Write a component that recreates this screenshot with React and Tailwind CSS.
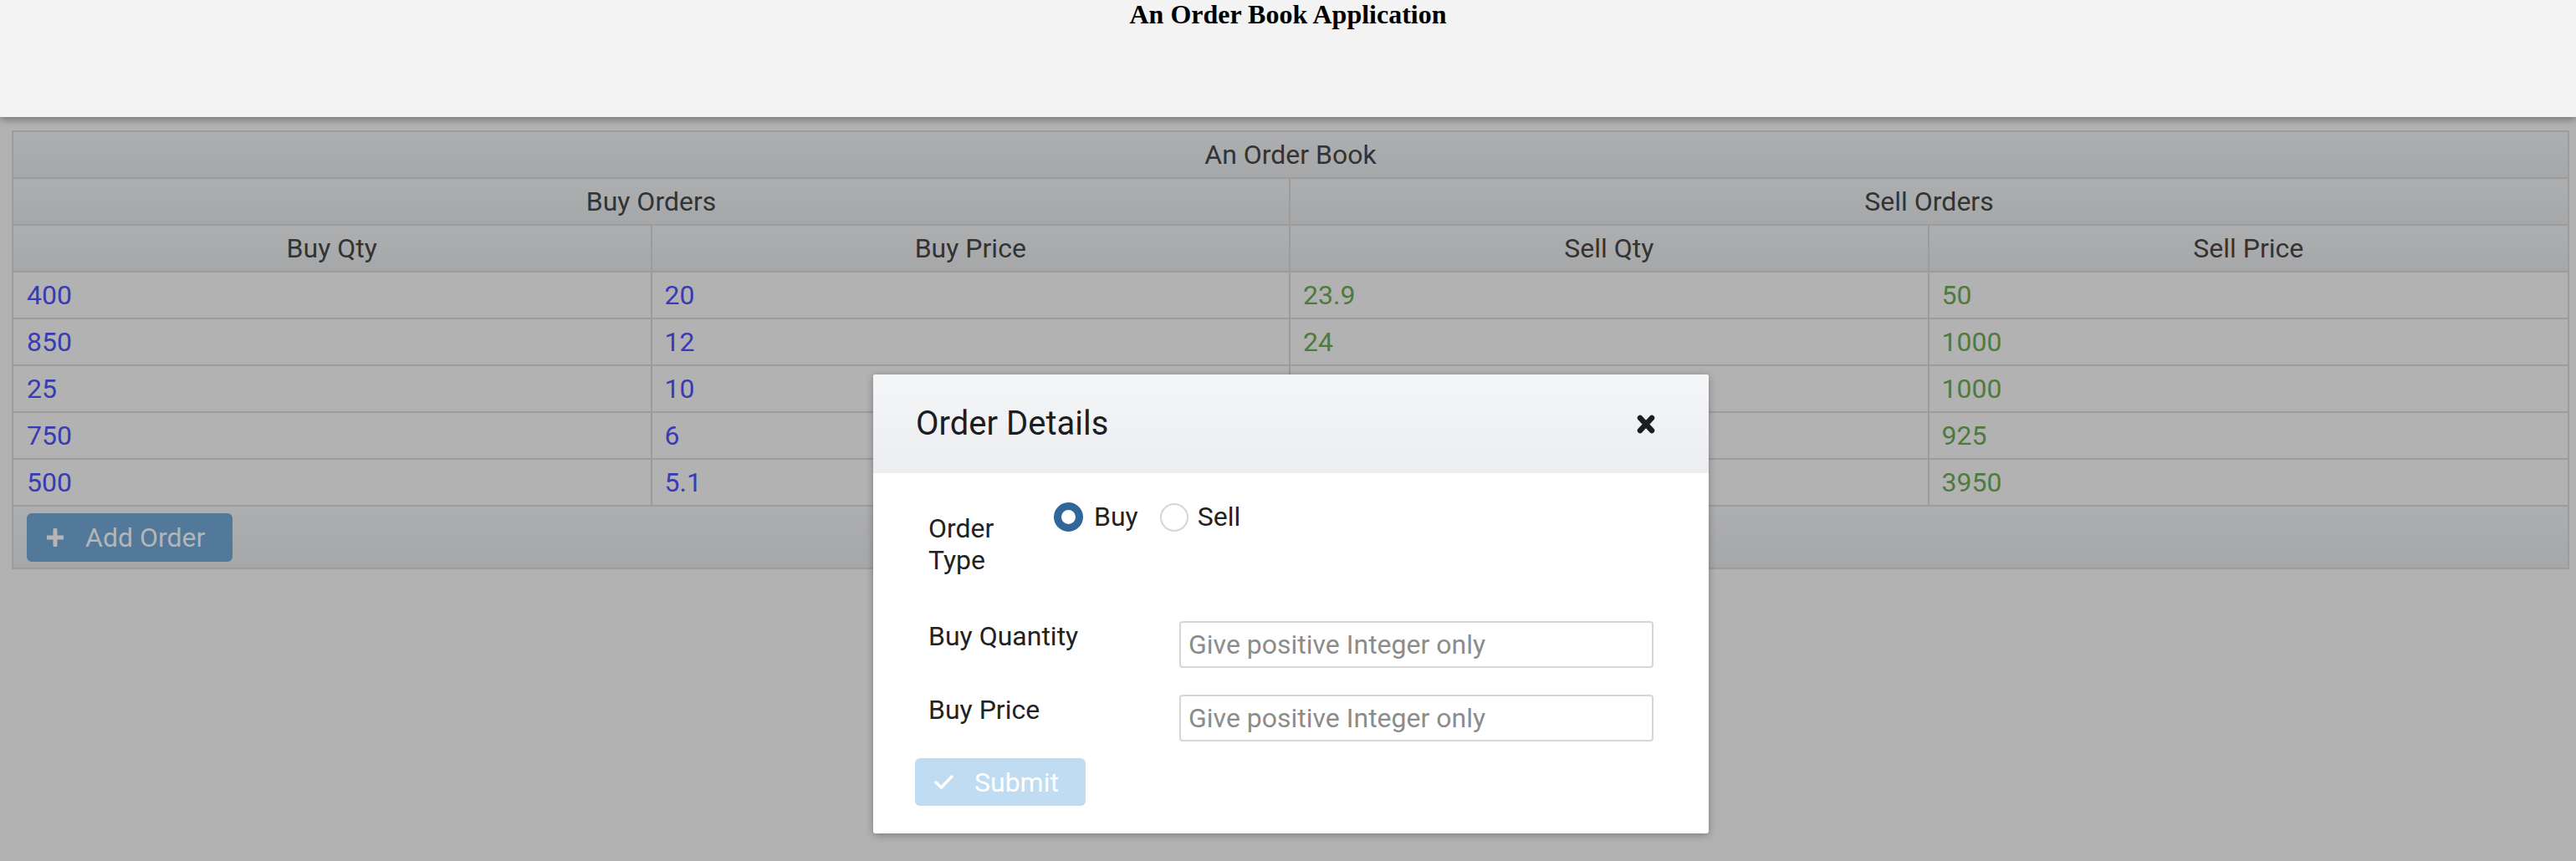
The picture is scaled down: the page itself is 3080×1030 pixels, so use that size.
// App.jsx
const buyOrders = [
  { qty: "400", price: "20" },
  { qty: "850", price: "12" },
  { qty: "25", price: "10" },
  { qty: "750", price: "6" },
  { qty: "500", price: "5.1" },
];

const sellOrders = [
  { qty: "23.9", price: "50" },
  { qty: "24", price: "1000" },
  { qty: "", price: "1000" },
  { qty: "", price: "925" },
  { qty: "", price: "3950" },
];

const PlusIcon = () => (
  <svg width="20" height="22" viewBox="0 0 20 22">
    <path d="M10 2v18M1 11h18" stroke="currentColor" strokeWidth="5" strokeLinecap="round" />
  </svg>
);

const CheckIcon = () => (
  <svg width="23" height="17" viewBox="0 0 23 17">
    <path d="M2 9l6.5 6L21 2" fill="none" stroke="currentColor" strokeWidth="3.5" strokeLinecap="round" strokeLinejoin="round" />
  </svg>
);

const CloseIcon = () => (
  <svg width="22" height="23" viewBox="0 0 22 23">
    <path d="M4 4l14 15M18 4L4 19" stroke="currentColor" strokeWidth="6.5" strokeLinecap="round" />
  </svg>
);

const headCell = "flex items-center justify-center bg-linear-to-b from-[#adaeb0] to-[#a6a7a9]";

const App = () => {
  return (
    <div className="relative min-h-[1030px] bg-[#b2b2b2] font-['Roboto',sans-serif]">
      {/* page header */}
      <div className="relative z-10 h-[140px] bg-[#f3f3f3] shadow-[0_3px_9px_rgba(0,0,0,0.35)]">
        <h1 className="text-center font-['Liberation_Serif',serif] text-[32px] font-bold leading-[34px] text-black">
          An Order Book Application
        </h1>
      </div>

      {/* order book table */}
      <div className="ml-[14px] mr-[8px] mt-[16px] border-2 border-[#9c9c9c] text-[32px]">
        <div className={`${headCell} h-[56px] border-b-2 border-[#9c9c9c] text-[#333]`}>An Order Book</div>
        <div className="grid grid-cols-2 border-b-2 border-[#9c9c9c] text-[#333]">
          <div className={`${headCell} h-[54px] border-r-2 border-[#9c9c9c]`}>Buy Orders</div>
          <div className={`${headCell} h-[54px]`}>Sell Orders</div>
        </div>
        <div className="grid grid-cols-4 border-b-2 border-[#9c9c9c] text-[#333]">
          <div className={`${headCell} h-[54px] border-r-2 border-[#9c9c9c]`}>Buy Qty</div>
          <div className={`${headCell} h-[54px] border-r-2 border-[#9c9c9c]`}>Buy Price</div>
          <div className={`${headCell} h-[54px] border-r-2 border-[#9c9c9c]`}>Sell Qty</div>
          <div className={`${headCell} h-[54px]`}>Sell Price</div>
        </div>

        {buyOrders.map((b, i) => (
          <div key={i} className="grid grid-cols-4 border-b-2 border-[#9c9c9c] bg-[#b2b2b2]">
            <div className="flex h-[54px] items-center border-r-2 border-[#9c9c9c] pl-[16px] text-[#3a3ab5]">{b.qty}</div>
            <div className="flex h-[54px] items-center border-r-2 border-[#9c9c9c] pl-[15px] text-[#3a3ab5]">{b.price}</div>
            <div className="flex h-[54px] items-center border-r-2 border-[#9c9c9c] pl-[15px] text-[#4e7a3e]">{sellOrders[i].qty}</div>
            <div className="flex h-[54px] items-center pl-[15px] text-[#4e7a3e]">{sellOrders[i].price}</div>
          </div>
        ))}

        <div className="bg-linear-to-b from-[#adaeb0] to-[#a6a7a9] px-[16px] pb-[7px] pt-[8px]">
          <button className="flex h-[58px] w-[246px] items-center gap-[26px] rounded-[6px] bg-[#52789a] pl-[24px] text-[32px] text-[#b5b5b5]">
            <PlusIcon />
            <span>Add Order</span>
          </button>
        </div>
      </div>

      {/* order dialog */}
      <div className="absolute left-[1044px] top-[448px] w-[999px] rounded-[3px] bg-white shadow-[0_2px_10px_rgba(0,0,0,0.3)]">
        <div className="flex h-[118px] items-center justify-between rounded-t-[3px] bg-linear-to-b from-[#f5f6f8] to-[#ebedf0] pl-[51px] pr-[64px]">
          <span className="text-[40px] text-[#1b1d1f]">Order Details</span>
          <span className="text-[#1b1d1f]">
            <CloseIcon />
          </span>
        </div>

        <div className="px-[50px] pb-[33px] pt-[32px] text-[32px] text-[#222]">
          <div className="flex">
            <div className="w-[150px] p-[16px] leading-[37.5px]">Order Type</div>
            <div className="flex items-center self-start px-[16px] pt-[2px] leading-[37.5px]">
              <span className="h-[35px] w-[35px] rounded-full border-[9px] border-[#2f679b] bg-white"></span>
              <span className="ml-[13px]">Buy</span>
              <span className="ml-[26px] h-[34px] w-[34px] rounded-full border-2 border-[#d6d6d6] bg-white"></span>
              <span className="ml-[11px]">Sell</span>
            </div>
          </div>

          <div className="mt-[22px] flex">
            <div className="w-[300px] p-[16px] leading-[37.5px]">Buy Quantity</div>
            <div className="flex-1 p-[16px]">
              <input
                type="text"
                placeholder="Give positive Integer only"
                className="h-[56px] w-full rounded-[4px] border-2 border-[#d6d6d6] px-[9px] text-[32px] outline-none placeholder:text-[#8c8c8c]"
              />
            </div>
          </div>

          <div className="flex">
            <div className="w-[300px] p-[16px] leading-[37.5px]">Buy Price</div>
            <div className="flex-1 p-[16px]">
              <input
                type="text"
                placeholder="Give positive Integer only"
                className="h-[56px] w-full rounded-[4px] border-2 border-[#d6d6d6] px-[9px] text-[32px] outline-none placeholder:text-[#8c8c8c]"
              />
            </div>
          </div>

          <button className="mt-[4px] flex h-[57px] w-[204px] items-center gap-[25px] rounded-[6px] bg-[#c0dcf3] pl-[23px] text-[32px] text-white">
            <CheckIcon />
            <span>Submit</span>
          </button>
        </div>
      </div>
    </div>
  );
};

export default App;
